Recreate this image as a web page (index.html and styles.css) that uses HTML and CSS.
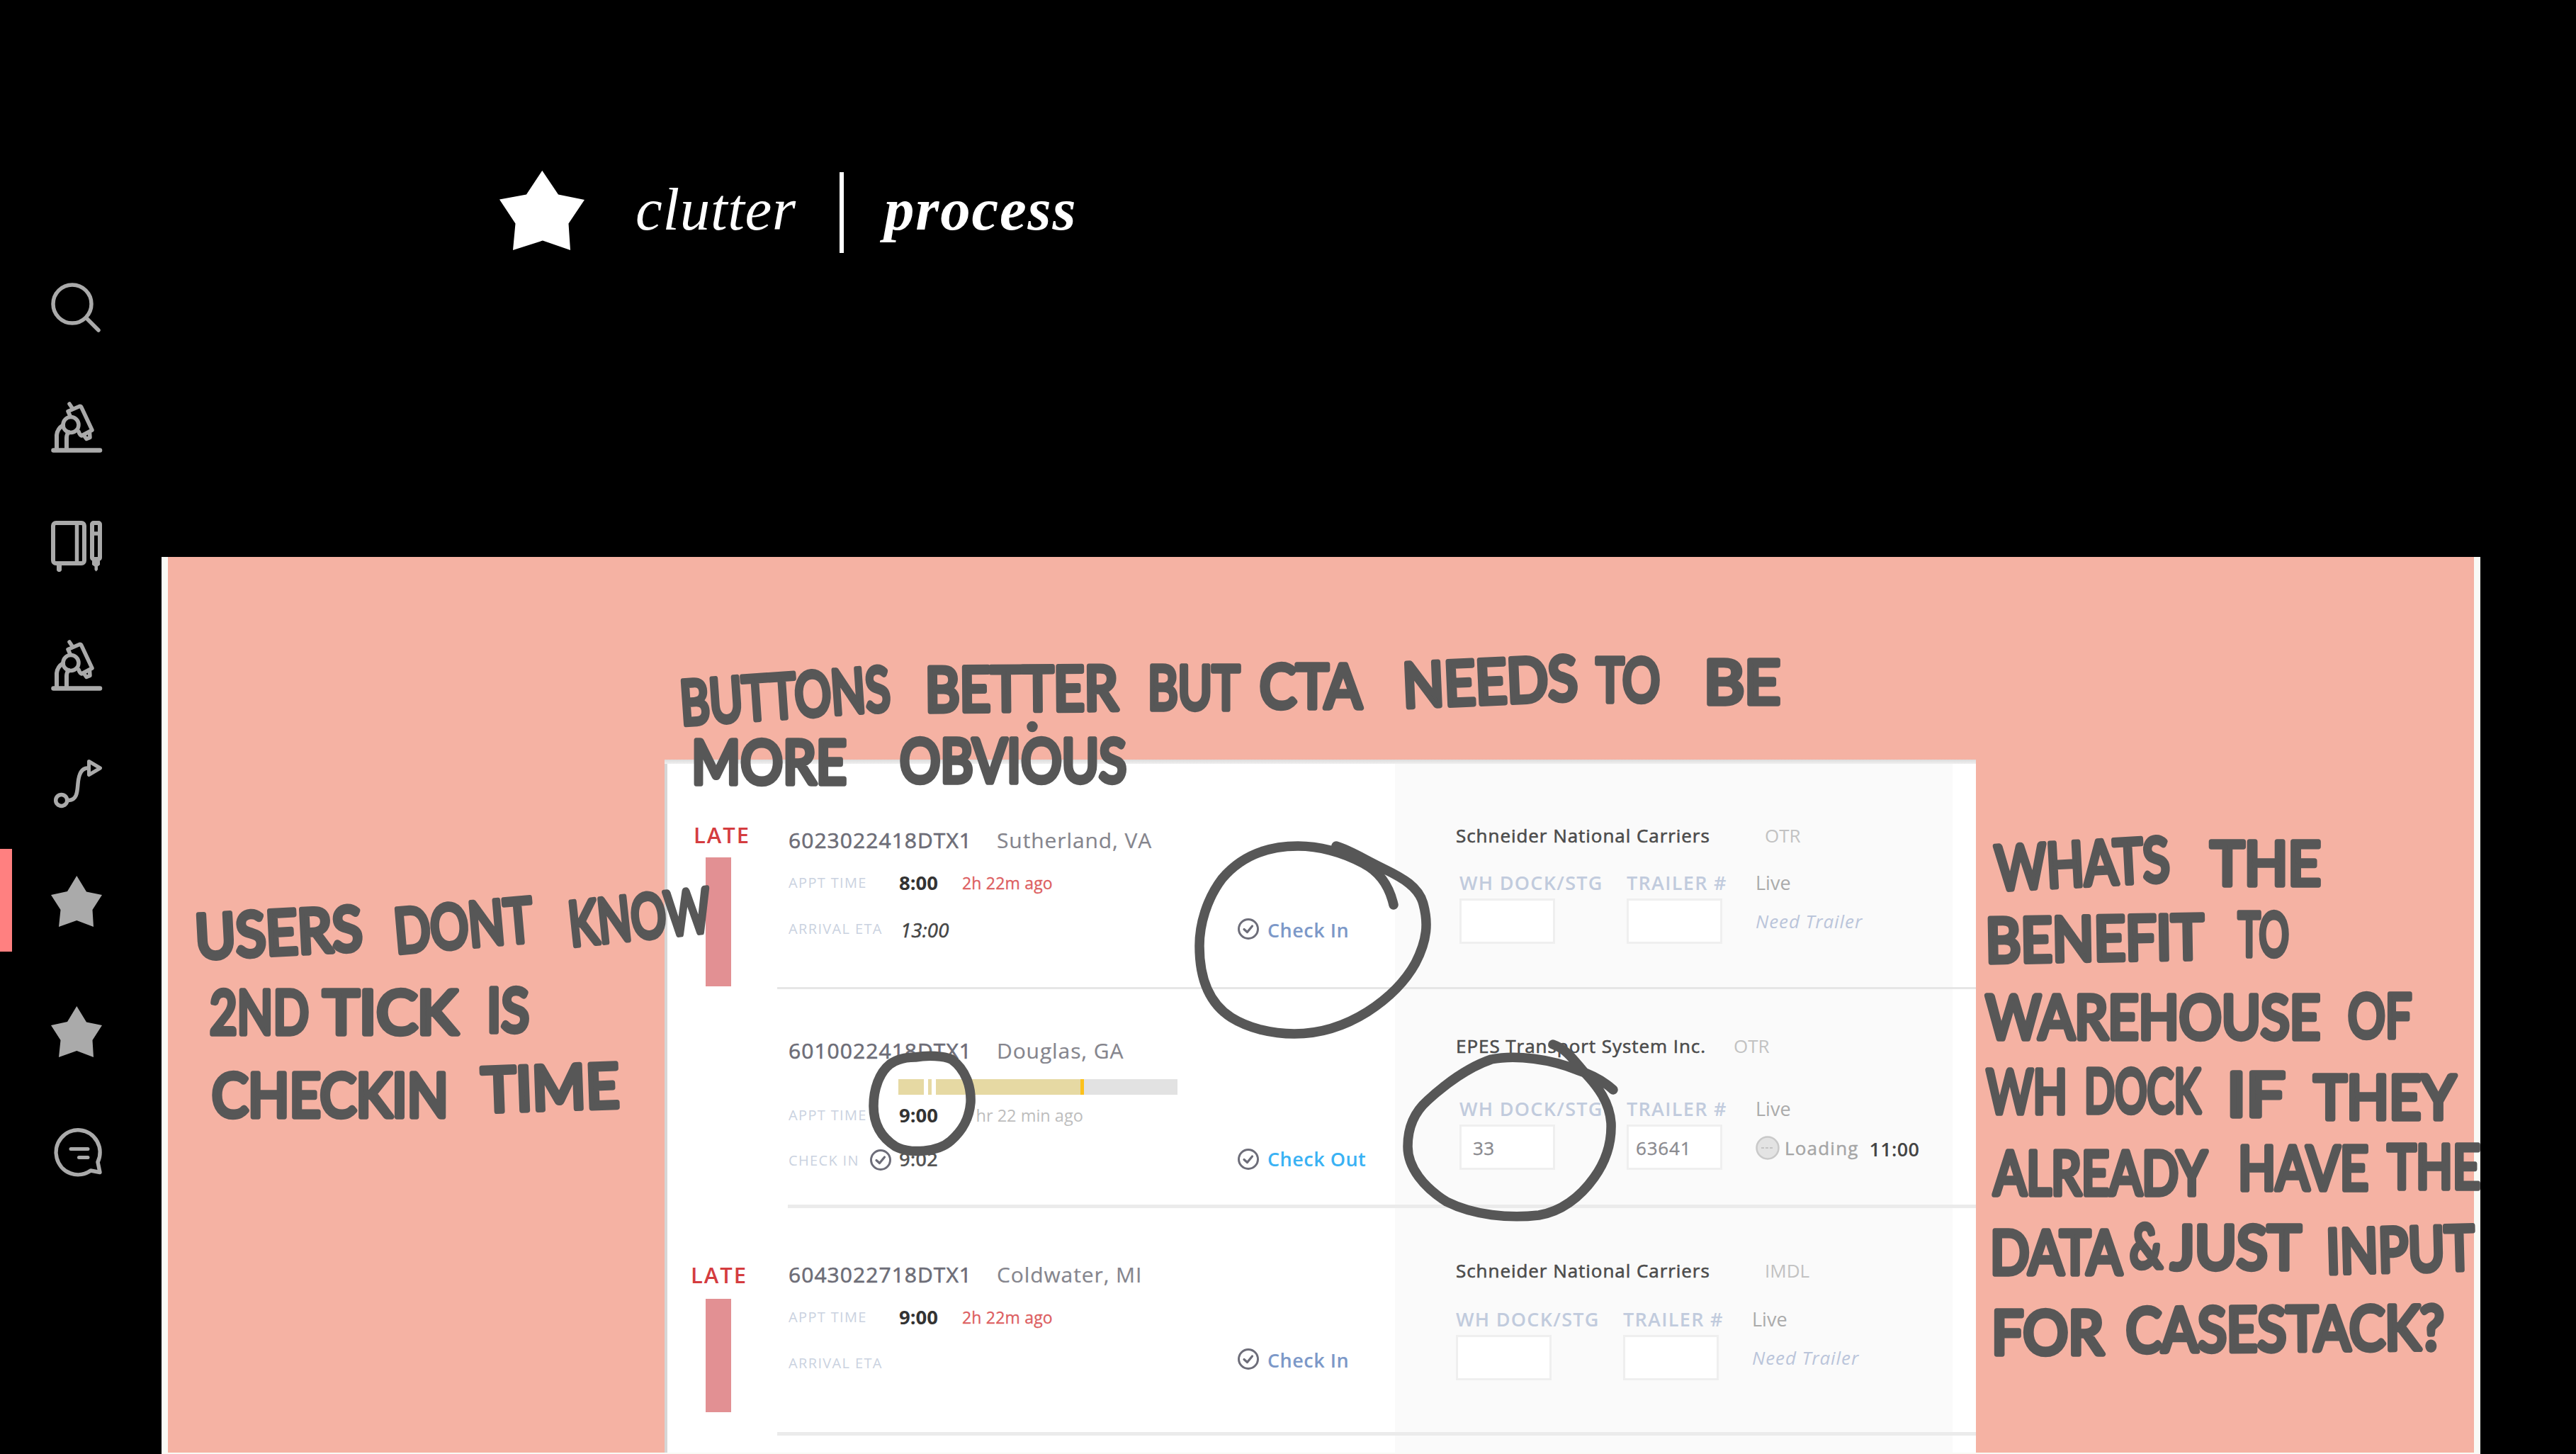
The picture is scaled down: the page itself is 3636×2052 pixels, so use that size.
FILE: index.html
```html
<!DOCTYPE html>
<html lang="en">
<head>
<meta charset="utf-8">
<title>clutter | process</title>
<link rel="stylesheet" href="styles.css">
</head>
<body>
<svg class="defs" aria-hidden="true">
  <symbol id="star" viewBox="68 1236 80 80"><path fill="currentColor" stroke="none" d="M108.3 1236 122 1258.5 144 1263 130.5 1284 132 1308 108.3 1299 83 1308 85.5 1284 72 1263 95 1258Z"/></symbol>
  <symbol id="microscope" viewBox="68 564 80 80"><path stroke-width="6.5" d="M75.5 635.6H141"/><path stroke-width="6" d="M80 634V614Q81 605 89 600M94 634V618Q94 613 97 610"/><circle cx="100" cy="599.5" r="11" stroke-width="5.5"/><path stroke-width="5.5" d="M98 570 102 576M99 587 96 580.5 112 573.5Q114 573 115 575L130 607 115 615Q112 613 111 609M118 614 122 619.5 127 617.5 126.500 610"/></symbol>
  <symbol id="check" viewBox="0 0 32 32"><circle cx="16" cy="16" r="13.5" stroke-width="3"/><path stroke-width="3.2" d="M10 16.500 14.500 20.500 21.500 12"/></symbol>
</svg>

<nav class="sidebar">
  <a class="item"><svg viewBox="68 396 80 80"><circle cx="102" cy="429" r="27" stroke-width="5.5"/><path stroke-width="5.5" d="M121.500 448.500 139 466"/></svg></a>
  <a class="item"><svg><use href="#microscope"/></svg></a>
  <a class="item"><svg viewBox="68 732 80 80"><rect x="75" y="738" width="44" height="57" rx="4" stroke-width="6"/><path stroke-width="5.500" d="M108.500 738V795M130 753H141"/><path stroke="none" fill="currentColor" d="M80 796H87V805L85 807H82L80 805ZM130 787H141V797L138 799.500V804L135.500 806.500 133.500 804V799.500L130 797Z"/><rect x="130" y="738" width="11" height="51" rx="2" stroke-width="6"/></svg></a>
  <a class="item"><svg><use href="#microscope"/></svg></a>
  <a class="item"><svg viewBox="68 1068 80 80"><circle cx="86.700" cy="1129.400" r="8" stroke-width="5.500"/><path stroke-width="5.500" d="M97 1129.500C109 1129 109 1117 110 1106 111 1094 114 1084.500 123 1084"/><path stroke-width="5" d="M125.500 1074.500 141.500 1084 125.500 1093.500Z"/></svg></a>
  <a class="item active"><svg><use href="#star"/></svg></a>
  <a class="item later"><svg><use href="#star"/></svg></a>
  <a class="item"><svg viewBox="68 1588 80 80"><path stroke-width="5.500" d="M138 1640A31 31.500 0 1 0 128 1652L141 1654.500Z"/><path stroke-width="5" d="M100 1621.600H124M111.500 1633.500H124"/></svg></a>
</nav>

<main class="page">
  <header class="brand">
    <svg class="brand-star" viewBox="705 240 120 114"><path fill="#fff" d="M765.300 240.700 788 274.500 825 282 802.500 315.500 805 353 766 339.500 724 353 727.500 315.500 705 281.500 743 274.500Z"/></svg>
    <span class="brand-name">clutter</span>
    <span class="brand-rule"></span>
    <span class="brand-section">process</span>
  </header>

  <section class="board">
    <div class="card">
      <article class="row row-1">
        <div class="status"><b>LATE</b><i></i></div>
        <div class="main">
          <div class="line head"><span class="id">6023022418DTX1</span><span class="city">Sutherland, VA</span></div>
          <div class="line appt"><span class="label">APPT TIME</span><span class="time">8:00</span><span class="ago late">2h 22m ago</span></div>
          <div class="line second"><span class="label">ARRIVAL ETA</span><span class="time eta">13:00</span></div>
        </div>
        <div class="action"><svg><use href="#check"/></svg><span>Check In</span></div>
        <div class="carrier">
          <div class="line"><span class="name">Schneider National Carriers</span><span class="mode">OTR</span></div>
          <div class="fields">
            <div class="dock"><label>WH DOCK/STG</label><div class="input"></div></div>
            <div class="trailer"><label>TRAILER #</label><div class="input"></div></div>
            <div class="state"><span class="live">Live</span><em>Need Trailer</em></div>
          </div>
        </div>
      </article>
      <hr>
      <article class="row row-2">
        <div class="status"></div>
        <div class="main">
          <div class="line head"><span class="id">6010022418DTX1</span><span class="city">Douglas, GA</span></div>
          <div class="progress"><i class="p1"></i><i class="p2"></i><i class="p3"></i><i class="p4"></i><i class="p5"></i></div>
          <div class="line appt"><span class="label">APPT TIME</span><span class="time">9:00</span><span class="ago">1 hr 22 min ago</span></div>
          <div class="line second"><span class="label">CHECK IN <svg><use href="#check"/></svg></span><span class="time checked">9:02</span></div>
        </div>
        <div class="action out"><svg><use href="#check"/></svg><span>Check Out</span></div>
        <div class="carrier">
          <div class="line"><span class="name short">EPES Transport System Inc.</span><span class="mode">OTR</span></div>
          <div class="fields">
            <div class="dock"><label>WH DOCK/STG</label><div class="input">33</div></div>
            <div class="trailer"><label>TRAILER #</label><div class="input tight">63641</div></div>
            <div class="state"><span class="live">Live</span><div class="loading"><svg viewBox="0 0 34 34"><circle cx="17" cy="17" r="15.500" fill="#e3e3e3" stroke="#c9c9c9" stroke-width="2.500"/><path d="M8 17H26" stroke="#c4c4c4" stroke-width="2" stroke-dasharray="4 2"/></svg><span>Loading</span><b>11:00</b></div></div>
          </div>
        </div>
      </article>
      <hr class="inset">
      <article class="row row-3">
        <div class="status"><b>LATE</b><i></i></div>
        <div class="main">
          <div class="line head"><span class="id">6043022718DTX1</span><span class="city">Coldwater, MI</span></div>
          <div class="line appt"><span class="label">APPT TIME</span><span class="time">9:00</span><span class="ago late">2h 22m ago</span></div>
          <div class="line second"><span class="label">ARRIVAL ETA</span></div>
        </div>
        <div class="action"><svg><use href="#check"/></svg><span>Check In</span></div>
        <div class="carrier">
          <div class="line"><span class="name">Schneider National Carriers</span><span class="mode">IMDL</span></div>
          <div class="fields">
            <div class="dock"><label>WH DOCK/STG</label><div class="input"></div></div>
            <div class="trailer"><label>TRAILER #</label><div class="input"></div></div>
            <div class="state"><span class="live">Live</span><em>Need Trailer</em></div>
          </div>
        </div>
      </article>
      <hr>
    </div>

    <!-- Hand-written notes and circles laid over the whole board -->
    <svg class="notes" viewBox="228 786 3273 1264">
      <g class="ink">
        <text lengthAdjust="spacingAndGlyphs" textLength="297" transform="translate(962 1023) rotate(-4)">BUTTONS</text>
        <text lengthAdjust="spacingAndGlyphs" textLength="272" transform="translate(1306 1004) rotate(-.5)">BETTER</text>
        <text lengthAdjust="spacingAndGlyphs" textLength="130" transform="translate(1620 1001)">BUT</text>
        <text lengthAdjust="spacingAndGlyphs" textLength="144" transform="translate(1778 999)">CTA</text>
        <text lengthAdjust="spacingAndGlyphs" textLength="247" transform="translate(1981 998) rotate(-2.500)">NEEDS</text>
        <text lengthAdjust="spacingAndGlyphs" textLength="90" transform="translate(2253 990)">TO</text>
        <text lengthAdjust="spacingAndGlyphs" textLength="108" transform="translate(2405 993)">BE</text>
        <text lengthAdjust="spacingAndGlyphs" textLength="219" transform="translate(976 1106)">MORE</text>
        <text lengthAdjust="spacingAndGlyphs" textLength="320" transform="translate(1270 1104)">OBVIOUS</text>
        <circle cx="1457" cy="1025.500" r="4"/>
        <text lengthAdjust="spacingAndGlyphs" textLength="236" transform="translate(277 1353) rotate(-3)">USERS</text>
        <text lengthAdjust="spacingAndGlyphs" textLength="196" transform="translate(559 1345) rotate(-5)">DONT</text>
        <text lengthAdjust="spacingAndGlyphs" textLength="201" transform="translate(806 1335) rotate(-6)">KNOW</text>
        <text lengthAdjust="spacingAndGlyphs" textLength="140" transform="translate(296 1459)">2ND</text>
        <text lengthAdjust="spacingAndGlyphs" textLength="190" transform="translate(456 1459)">TICK</text>
        <text lengthAdjust="spacingAndGlyphs" textLength="60" transform="translate(687 1456)">IS</text>
        <text lengthAdjust="spacingAndGlyphs" textLength="334" transform="translate(299 1576)">CHECKIN</text>
        <text lengthAdjust="spacingAndGlyphs" textLength="194" transform="translate(681 1569) rotate(-2)">TIME</text>
        <text lengthAdjust="spacingAndGlyphs" textLength="246" transform="translate(2818 1256) rotate(-3)">WHATS</text>
        <text lengthAdjust="spacingAndGlyphs" textLength="156" transform="translate(3120 1249)">THE</text>
        <text lengthAdjust="spacingAndGlyphs" textLength="308" transform="translate(2803 1358) rotate(-1)">BENEFIT</text>
        <text lengthAdjust="spacingAndGlyphs" textLength="72" transform="translate(3159 1349)">TO</text>
        <text lengthAdjust="spacingAndGlyphs" textLength="472" transform="translate(2803 1466)">WAREHOUSE</text>
        <text lengthAdjust="spacingAndGlyphs" textLength="90" transform="translate(3314 1464)">OF</text>
        <text lengthAdjust="spacingAndGlyphs" textLength="114" transform="translate(2804 1571)">WH</text>
        <text lengthAdjust="spacingAndGlyphs" textLength="164" transform="translate(2942 1570)">DOCK</text>
        <text lengthAdjust="spacingAndGlyphs" textLength="82" transform="translate(3143 1575)">IF</text>
        <text lengthAdjust="spacingAndGlyphs" textLength="200" transform="translate(3266 1579)">THEY</text>
        <text lengthAdjust="spacingAndGlyphs" textLength="301" transform="translate(2814 1686)">ALREADY</text>
        <text lengthAdjust="spacingAndGlyphs" textLength="184" transform="translate(3159 1679)">HAVE</text>
        <text lengthAdjust="spacingAndGlyphs" textLength="131" transform="translate(3370 1677)">THE</text>
        <text lengthAdjust="spacingAndGlyphs" textLength="186" transform="translate(2809 1798)">DATA</text>
        <text lengthAdjust="spacingAndGlyphs" textLength="46" class="amp" transform="translate(3006 1789)">&amp;</text>
        <text lengthAdjust="spacingAndGlyphs" textLength="184" transform="translate(3064 1791)">JUST</text>
        <text lengthAdjust="spacingAndGlyphs" textLength="209" transform="translate(3284 1797) rotate(-1.500)">INPUT</text>
        <text lengthAdjust="spacingAndGlyphs" textLength="158" transform="translate(2811 1911)">FOR</text>
        <text lengthAdjust="spacingAndGlyphs" textLength="449" transform="translate(3001 1908) rotate(-.5)">CASESTACK?</text>
      </g>
      <path d="M1886 1194C1906 1200 1924 1212 1953 1226 1980 1239 2003 1252 2009 1276 2016 1302 2015 1326 1998 1359 1982 1388 1958 1410 1930 1428 1895 1450 1860 1459 1827 1459 1795 1459 1762 1451 1738 1436 1705 1415 1693 1378 1693 1335 1693 1305 1703 1269 1725 1240 1752 1208 1790 1194 1832 1194 1860 1194 1895 1202 1925 1219 1950 1232 1962 1255 1967 1277"/>
      <path d="M2192 1474C2212 1481 2222 1497 2236 1513 2256 1534 2272 1556 2274 1585 2275 1612 2268 1637 2250 1662 2230 1690 2203 1710 2172 1715 2130 1720 2080 1715 2042 1696 2010 1676 1987 1648 1987 1618 1987 1590 1998 1568 2015 1553 2038 1532 2070 1507 2105 1495 2140 1488 2190 1495 2226 1510 2248 1517 2264 1526 2277 1538"/>
      <path d="M1292 1492C1310 1489 1332 1490 1343 1495 1364 1510 1371 1535 1370 1556 1368 1580 1358 1596 1342 1610 1324 1626 1285 1629 1264 1618 1242 1604 1233 1585 1233 1561 1233 1537 1241 1514 1256 1502 1267 1494 1280 1492 1292 1492Z"/>
    </svg>
  </section>
</main>
</body>
</html>
```
FILE: styles.css
```css
* { box-sizing: border-box; }
body {
  margin: 0;
  width: 3636px;
  height: 2052px;
  overflow: hidden;
  background: #000;
  display: grid;
  grid-template-columns: 228px 1fr;
  font-family: "Open Sans", "Noto Sans", sans-serif;
}
.defs { position: absolute; width: 0; height: 0; }

/* Sidebar */
.sidebar {
  padding-top: 396px;
  display: flex;
  flex-direction: column;
  gap: 88px;
  color: #aaa;
}
.item { position: relative; height: 80px; padding-left: 68px; }
.item svg { display: block; width: 80px; height: 80px; fill: none; stroke: currentColor; stroke-linecap: round; stroke-linejoin: round; }
.item.later { margin-top: 15.700px; }
.item.active::before {
  content: "";
  position: absolute;
  left: 0;
  top: -38px;
  width: 17px;
  height: 145px;
  background: #ff8080;
}

/* Brand header */
.brand {
  height: 786px;
  padding: 240px 0 0 477px;
  display: flex;
  align-items: flex-start;
  color: #fff;
  font: italic 85px/110px "Liberation Serif", serif;
}
.brand-star { width: 120px; height: 114px; margin-right: 72px; }
.brand-name { width: 288px; letter-spacing: .700px; }
.brand-rule { width: 6px; height: 114px; margin-top: 3px; background: #fff; }
.brand-section { margin-left: 57px; font-weight: bold; letter-spacing: 1.800px; }

/* Board */
.board {
  position: relative;
  width: 3273px;
  height: 1264px;
  padding: 286px 0 0 701px;
  background: #f5b2a3;
  border: solid #f9faf5;
  border-width: 0 9px;
  outline: 2px solid #f9faf5;
  clip-path: inset(0 0 -2px 0);
}
.card {
  width: 1851px;
  height: 978px;
  padding-top: 6px;
  background:
    linear-gradient(#dcdcdc, #efefef) 0 0 / 100% 6px no-repeat,
    linear-gradient(#d6d6d6, #d6d6d6) 0 0 / 4px 100% no-repeat,
    linear-gradient(#fafafa, #fafafa) 1031px 0 / 787px 100% no-repeat,
    #fff;
}
.card hr { height: 3px; margin: 0 0 0 159px; border: 0; background: #e6e6e6; }
.card hr.inset { height: 5px; margin-left: 174px; background: #ebebeb; }
.card .row-3 + hr { height: 5px; background: #ebebeb; }

.row { display: grid; grid-template-columns: 175px 633px 309px 1fr; }
.row-1 { height: 315px; --check: 215px; }
.row-2 { height: 304px; --check: 219.500px; }
.row-3 { height: 316px; --check: 194.500px; }

.status { display: flex; flex-direction: column; }
.status b { height: 40px; margin-left: 41px; font-size: 31px; line-height: 40px; font-weight: 600; letter-spacing: 2px; color: #d43c3f; }
.row-1 .status { padding-top: 80px; }
.row-3 .status { padding-top: 74px; }
.row-3 .status b { margin-left: 37px; }
.status i { width: 35.500px; height: 182px; margin: 12px 0 0 58px; background: #e29093; }
.row-3 .status i { height: 160px; margin-top: 14px; }

.line { display: flex; align-items: flex-start; height: 40px; line-height: 40px; white-space: nowrap; }
.row-1 .main { padding-top: 88px; }
.row-2 .main { padding-top: 67px; }
.row-3 .main { padding-top: 74px; }
.id { width: 294px; font-size: 30px; letter-spacing: 1.050px; color: #6d6d77; -webkit-text-stroke: .6px #6d6d77; }
.city { font-size: 30px; letter-spacing: .9px; color: #85858d; -webkit-text-stroke: .2px #85858d; }
.appt { margin-top: 20px; }
.second { margin-top: 25px; }
.row-2 .appt { margin-top: 9px; }
.row-2 .second { margin-top: 24px; }
.label { width: 156px; display: flex; font-size: 20px; letter-spacing: 1.350px; color: #cad2e0; }
.label svg { width: 32px; height: 32px; margin: 3px 0 0 14px; }
.time { width: 89px; font-size: 27.500px; font-weight: 700; color: #333; }
.eta { padding: 2px 0 0 2px; font-style: italic; font-weight: 400; color: #444; letter-spacing: .2px; -webkit-text-stroke: .5px #444; }
.checked { margin-top: -2px; font-weight: 600; color: #555; }
.ago { font-size: 23.500px; color: #bdbdbd; }
.ago.late { font-size: 23px; letter-spacing: .2px; color: #dd5f62; -webkit-text-stroke: .3px #dd5f62; }
.label svg, .action svg { flex: none; fill: none; stroke: #6d6d79; stroke-linecap: round; stroke-linejoin: round; }

.progress { display: flex; height: 22px; margin: 20px 0 0 155px; }
.progress i { background: #e6d9a3; }
.p1 { width: 36px; margin-right: 6px; }
.p2 { width: 5px; margin-right: 6px; }
.p3 { width: 204px; }
.progress .p4 { width: 5px; background: #fcc11c; }
.progress .p5 { width: 132px; background: #e2e2e2; }

.action { display: flex; gap: 11px; padding-top: var(--check); line-height: 40px; font-size: 27px; font-weight: 600; letter-spacing: .5px; color: #7c98c8; }
.action svg { width: 32px; height: 32px; margin-top: 2px; }
.out { color: #3ab2f4; }
.out svg { margin-top: 4px; }

.carrier { font-size: 26px; }
.row-1 .carrier { padding-top: 81px; }
.row-2 .carrier { padding-top: 60px; }
.row-3 .carrier { padding-top: 68px; }
.name { width: 436px; letter-spacing: .95px; color: #4c4c4c; -webkit-text-stroke: .6px #4c4c4c; }
.name.short { width: 392px; }
.mode { color: #c2c2c2; }
.fields { display: flex; margin: 27px 0 0 5px; }
.row-2 .fields { margin-top: 49px; }
.row-3 .fields { margin: 29px 0 0 0; }
.dock { width: 236px; }
.trailer { width: 182px; }
.fields label { display: block; height: 42px; line-height: 40px; font-size: 27px; font-weight: 600; letter-spacing: 1.300px; color: #c1cbdd; }
.input { width: 135px; height: 64px; padding-left: 16px; line-height: 60px; border: 3px solid #efefef; background: #fff; color: #8a8a8f; letter-spacing: .4px; -webkit-text-stroke: .3px #8a8a8f; }
.input.tight { padding-left: 10px; letter-spacing: .8px; }
.state { display: flex; flex-direction: column; line-height: 40px; }
.live { height: 54px; font-size: 27px; color: #ababab; }
.state em { color: #bac5da; letter-spacing: .9px; }
.loading { display: flex; align-items: flex-start; margin-top: 1px; color: #a5a5a5; letter-spacing: 1.200px; -webkit-text-stroke: .4px #a5a5a5; }
.loading svg { width: 34px; height: 34px; margin: 3px 7px 0 0; fill: none; }
.loading b { margin: 2px 0 0 15px; font-size: 27px; font-weight: 600; letter-spacing: .3px; color: #444; -webkit-text-stroke: 0; }

/* Pen annotations */
.notes { position: absolute; left: -9px; top: 0; width: 3273px; height: 1264px; fill: none; stroke: #575757; stroke-width: 13.500; stroke-linecap: round; stroke-linejoin: round; }
.ink { fill: #575757; stroke-width: 7.500; font: 400 86px Lato, sans-serif; }
```
